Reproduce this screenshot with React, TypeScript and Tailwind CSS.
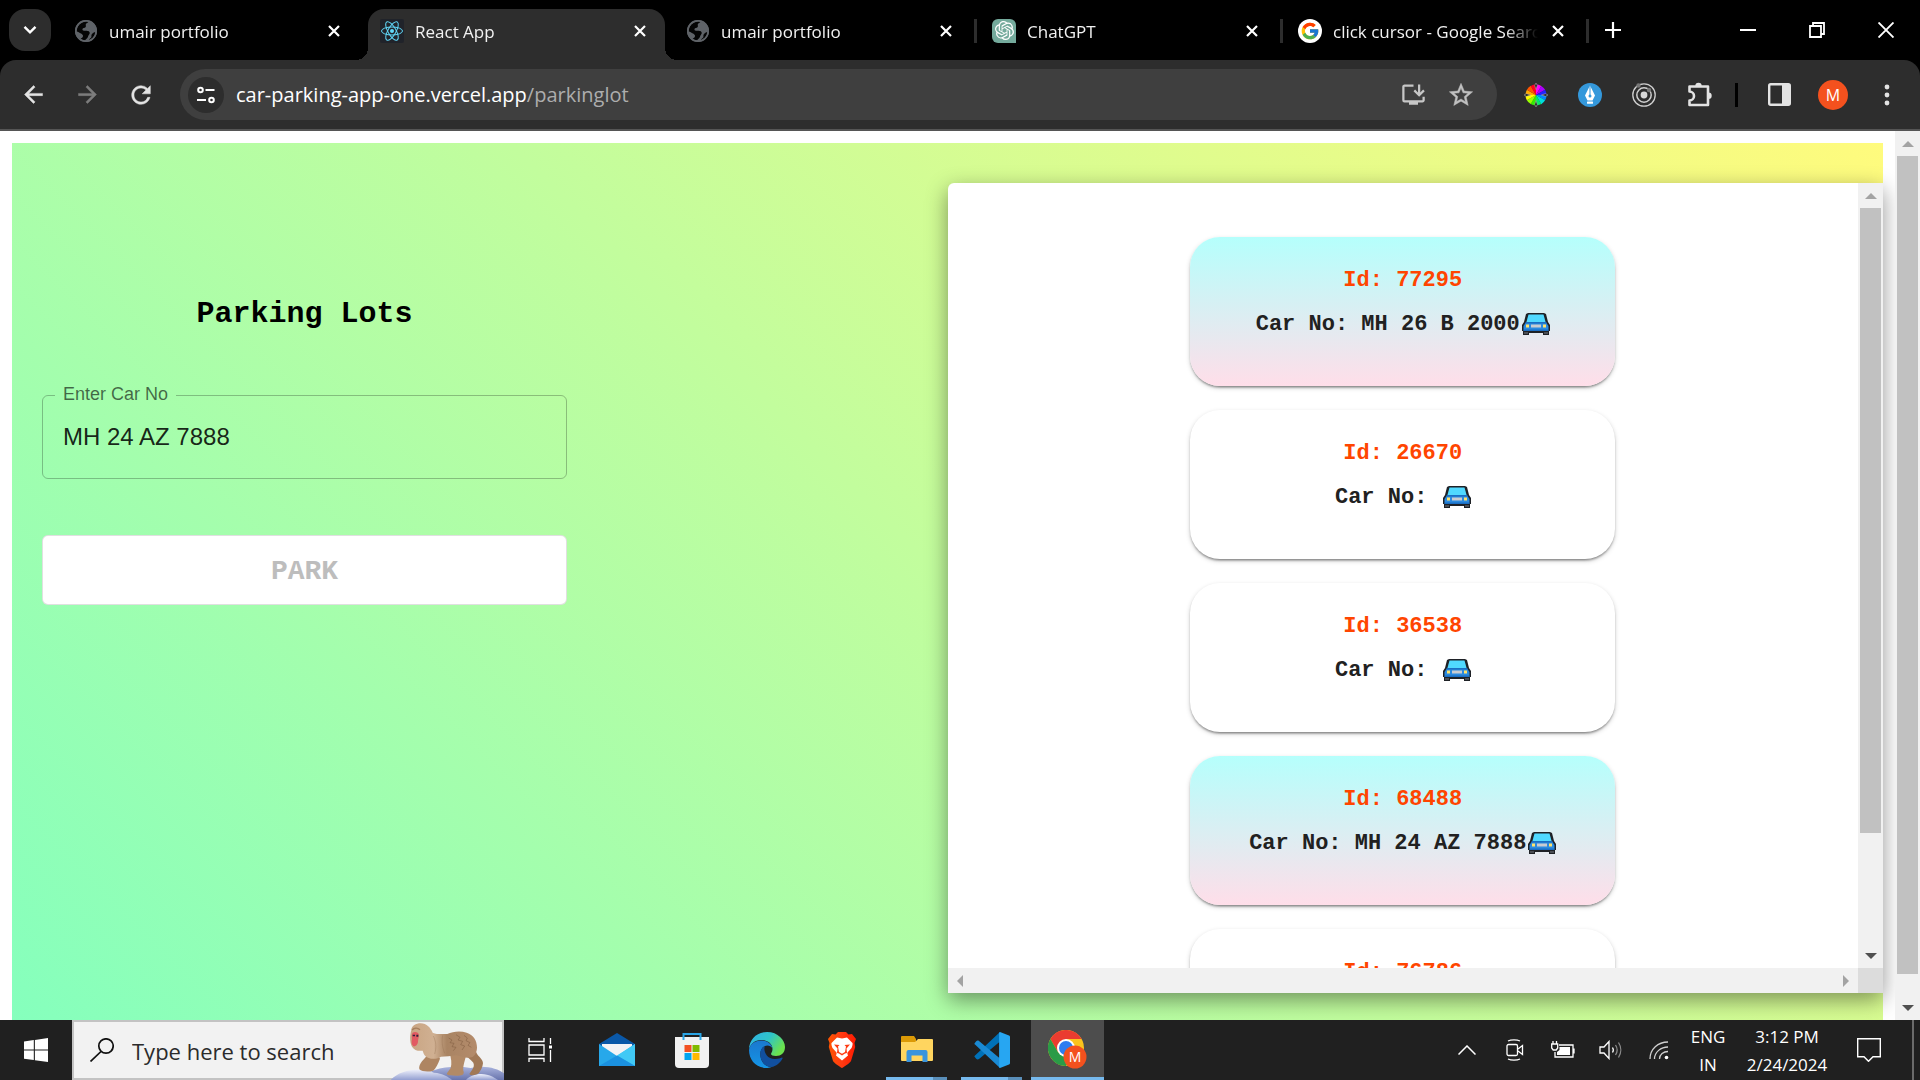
import React from "react";
import type { ReactNode } from "react";
import { FcGoogle } from "react-icons/fc";
import { SiOpenai } from "react-icons/si";
import { MdInstallDesktop } from "react-icons/md";

/* ---------- Favicons ---------- */

function GlobeIcon() {
  return (
    <svg viewBox="0 0 24 24" className="size-6" aria-hidden="true">
      <circle cx="12" cy="12" r="11" fill="#5f6368" />
      <path
        d="M9 3.2c2-.9 4-.9 5.500-.5-.6 1.200-2.300 1.300-2.700 2.600-.3 1.200.6 2-.3 3-.8.9-2.600.5-3 1.700-.3 1 .4 1.700 1.500 1.800 1.800.1 3.700-.3 5 .8 1.200 1.100.8 2.300-.2 3.300-.9.900-.6 2.100-1.500 3-.8.800-1.800 1.600-2.300 2.300-1.500-.1-3.200-.7-4.500-1.700 1.300-.3 2.300-1 2.500-2.200.2-1.300-.9-2-2-2.700-1.500-1-3-2-4.300-2.200C2.500 8.500 5 4.700 9 3.200Z"
        fill="#050505"
      />
      <path
        d="M21.400 13c-.3 3.700-2.800 7-6.400 8 .3-1.300 1.700-1.600 2.300-2.800.4-1-.2-2 .5-3 .8-1.200 2.200-1.800 3.600-2.200Z"
        fill="#050505"
      />
      <circle cx="12" cy="12" r="10.200" fill="none" stroke="#5f6368" strokeWidth="1.6" />
    </svg>
  );
}

function ReactIcon() {
  return (
    <svg viewBox="0 0 24 24" className="size-6" aria-hidden="true">
      <rect width="24" height="24" rx="2" fill="#20232a" />
      <g fill="none" stroke="#61dafb" strokeWidth="1">
        <ellipse cx="12" cy="12" rx="10.5" ry="4" />
        <ellipse cx="12" cy="12" rx="10.5" ry="4" transform="rotate(60 12 12)" />
        <ellipse cx="12" cy="12" rx="10.5" ry="4" transform="rotate(120 12 12)" />
      </g>
      <circle cx="12" cy="12" r="2" fill="#61dafb" />
    </svg>
  );
}

function ChatIcon() {
  return (
    <span className="flex size-6 items-center justify-center rounded-md rounded-br-none bg-[#74aa9c]">
      <SiOpenai className="size-[19px] text-white" />
    </span>
  );
}

function GoogleIcon() {
  return (
    <span className="flex size-6 items-center justify-center rounded-full bg-white">
      <FcGoogle className="size-5" />
    </span>
  );
}

/* ---------- Browser chrome ---------- */

function CrossIcon() {
  return (
    <svg viewBox="0 0 14 14" className="size-3.5" aria-hidden="true">
      <path d="M2 2l10 10M12 2 2 12" stroke="#fff" strokeWidth="2.2" fill="none" />
    </svg>
  );
}

type TabInfo = { title: string; icon: ReactNode; active?: boolean; divider?: boolean };

const tabs: TabInfo[] = [
  { title: "umair portfolio", icon: <GlobeIcon /> },
  { title: "React App", icon: <ReactIcon />, active: true },
  { title: "umair portfolio", icon: <GlobeIcon />, divider: true },
  { title: "ChatGPT", icon: <ChatIcon />, divider: true },
  { title: "click cursor - Google Search", icon: <GoogleIcon />, divider: true },
];

function Tab({ title, icon, active, divider }: TabInfo) {
  return (
    <div className="flex h-[51px] w-[306px] min-w-0">
      <div
        className={
          active
            ? "relative flex min-w-0 flex-1 rounded-t-2xl bg-[#2d2d2d] pr-[13px] pb-2 pl-3"
            : "relative flex min-w-0 flex-1 pr-[13px] pb-2 pl-3"
        }
      >
        {active && (
          <>
            <span className="absolute bottom-0 -left-3 size-3 bg-[radial-gradient(circle_at_0_0,#000_12px,#2d2d2d_12px)]" />
            <span className="absolute -right-3 bottom-0 size-3 bg-[radial-gradient(circle_at_100%_0,#000_12px,#2d2d2d_12px)]" />
          </>
        )}
        <button type="button" className="flex min-w-0 flex-1 items-center gap-[11px] text-left">
          <span className="shrink-0">{icon}</span>
          <span className="min-w-0 flex-1 overflow-hidden [mask-image:linear-gradient(to_right,#000_84%,transparent)] pt-0.5 text-[17px] leading-7 whitespace-nowrap text-[#f1f1f1]">
            {title}
          </span>
        </button>
        <button type="button" aria-label="Close tab" className="ml-2 flex w-6 items-center justify-center">
          <CrossIcon />
        </button>
      </div>
      <div className="flex w-[9px] items-center justify-center pb-2">
        {divider && <span className="h-6 w-[3px] bg-[#2d2d2d]" />}
      </div>
    </div>
  );
}

function TabStrip() {
  return (
    <div className="flex h-[60px] items-start bg-black pt-[9px] pl-[9px]">
      <button
        type="button"
        aria-label="Search tabs"
        className="mr-[11px] flex h-[42px] w-[42px] shrink-0 items-center justify-center rounded-2xl bg-[#2d2d2d]"
      >
        <svg viewBox="0 0 14 10" className="w-3.5" aria-hidden="true">
          <path d="M1.5 1.8 7 7.3l5.5-5.5" stroke="#fff" strokeWidth="2.4" fill="none" />
        </svg>
      </button>
      {tabs.map((tab, i) => (
        <Tab key={i} {...tab} />
      ))}
      <button type="button" aria-label="New tab" className="flex h-[42px] w-[42px] items-center justify-center">
        <svg viewBox="0 0 16 16" className="size-4" aria-hidden="true">
          <path d="M8 0v16M0 8h16" stroke="#fff" strokeWidth="2.2" />
        </svg>
      </button>
      <div className="-mt-[9px] ml-auto flex h-[60px]">
        <button type="button" aria-label="Minimize" className="flex w-[69px] items-center justify-center">
          <span className="h-0.5 w-4 bg-white" />
        </button>
        <button type="button" aria-label="Restore" className="flex w-[69px] items-center justify-center">
          <svg viewBox="0 0 16 16" className="size-4" fill="none" stroke="#fff" strokeWidth="1.8" aria-hidden="true">
            <path d="M1 4h11v11H1zM4 4V1h11v11h-3" />
          </svg>
        </button>
        <button type="button" aria-label="Close window" className="flex w-[69px] items-center justify-center">
          <svg viewBox="0 0 16 16" className="size-4" aria-hidden="true">
            <path d="M.5.5l15 15M15.5.5l-15 15" stroke="#fff" strokeWidth="1.9" />
          </svg>
        </button>
      </div>
    </div>
  );
}

function Glyph({ d, className }: { d: string; className: string }) {
  return (
    <svg viewBox="0 0 24 24" className={className} fill="currentColor" stroke="currentColor" strokeWidth="0.4" aria-hidden="true">
      <path d={d} />
    </svg>
  );
}

const backPath = "M20 11H7.83l5.59-5.59L12 4l-8 8 8 8 1.41-1.41L7.83 13H20v-2z";
const forwardPath = "M12 4l-1.41 1.41L16.17 11H4v2h12.17l-5.58 5.59L12 20l8-8z";
const reloadPath =
  "M17.65 6.35A7.958 7.958 0 0 0 12 4c-4.42 0-7.99 3.58-7.99 8s3.57 8 7.99 8c3.73 0 6.84-2.55 7.73-6h-2.08A5.99 5.99 0 0 1 12 18c-3.31 0-6-2.69-6-6s2.69-6 6-6c1.66 0 3.14.69 4.22 1.78L13 11h7V4l-2.35 2.35z";
const starPath =
  "M22 9.24l-7.19-.62L12 2 9.19 8.63 2 9.24l5.46 4.73L5.82 21 12 17.27 18.18 21l-1.63-7.03L22 9.24zM12 15.4l-3.76 2.27 1-4.28-3.32-2.88 4.38-.38L12 6.1l1.71 4.04 4.38.38-3.32 2.88 1 4.28L12 15.4z";

const wheel = ["#f0f", "#a0f", "#22f", "#08f", "#0dd", "#0e6", "#3e0", "#9f0", "#ff0", "#fa0", "#f50", "#f02"];

function ColorWheelIcon() {
  return (
    <svg viewBox="-12 -12 24 24" className="size-6" aria-hidden="true">
      {wheel.map((color, i) => (
        <path key={color} d="M0 0V-10.500A10.500 10.500 0 0 1 5.300-9.100Z" fill={color} transform={`rotate(${i * 30})`} />
      ))}
      <g fill="#222" stroke="#bbb" strokeWidth=".5">
        <path d="M0-12l1.300 2.500L0-5.500l-1.300-4Z" />
        <path d="M0-12l1.300 2.500L0-5.500l-1.300-4Z" transform="rotate(90)" />
        <path d="M0-12l1.300 2.500L0-5.500l-1.300-4Z" transform="rotate(180)" />
        <path d="M0-12l1.300 2.500L0-5.500l-1.300-4Z" transform="rotate(270)" />
      </g>
    </svg>
  );
}

function PenIcon() {
  return (
    <svg viewBox="0 0 24 24" className="size-6" aria-hidden="true">
      <circle cx="12" cy="12" r="12" fill="#3498db" />
      <path d="M12 2.5 7 12.500l2.500 5h5l2.500-5Z" fill="#fff" />
      <path d="M12 3v10" stroke="#3498db" strokeWidth="1" />
      <circle cx="12" cy="13" r="1.5" fill="#3498db" />
      <rect x="9" y="18.500" width="6" height="2.300" rx=".5" fill="#fff" />
    </svg>
  );
}

function RingsIcon() {
  return (
    <svg viewBox="0 0 24 24" className="size-6" fill="none" stroke="#cfcfcf" aria-hidden="true">
      <circle cx="12" cy="12" r="11.2" strokeWidth="1.3" />
      <circle cx="12" cy="12" r="7.2" strokeWidth="1.5" />
      <circle cx="12" cy="12" r="3.4" fill="#d8d8d8" stroke="none" />
      <circle cx="6.5" cy="2.500" r="2.2" fill="#777" stroke="none" />
      <circle cx="17" cy="7" r="2.2" fill="#777" stroke="none" />
    </svg>
  );
}

function PuzzleIcon() {
  return (
    <svg viewBox="0 0 26 26" className="ml-0.5 size-[26px]" aria-hidden="true">
      <path
        d="M3.500 4.500h18.500v18.500H3.500v-4.500a4 4 0 0 0 0-9Z"
        fill="none"
        stroke="#e3e3e3"
        strokeWidth="2.6"
        strokeLinejoin="round"
      />
      <path d="M9.300 4a3.200 3.200 0 0 1 6.400 0ZM22.500 10.500a3.200 3.200 0 0 1 0 6.400Z" fill="#e3e3e3" />
    </svg>
  );
}

function Toolbar() {
  return (
    <div className="bg-black">
      <div className="flex h-[71px] items-center rounded-t-2xl border-b-2 border-[#555] bg-[#2d2d2d] pr-1.5">
        <button type="button" aria-label="Back" className="flex w-[54px] justify-center pl-3">
          <Glyph d={backPath} className="size-[27px] text-[#e3e3e3]" />
        </button>
        <button type="button" aria-label="Forward" className="flex w-[54px] justify-center pl-3">
          <Glyph d={forwardPath} className="size-[27px] text-[#7c7c7c]" />
        </button>
        <button type="button" aria-label="Reload" className="mr-[18px] flex w-[54px] justify-center pl-3">
          <Glyph d={reloadPath} className="size-7 text-[#e3e3e3]" />
        </button>
        <div className="flex h-[51px] min-w-0 flex-1 items-center rounded-full bg-[#3f3f3f] pl-2">
          <button
            type="button"
            aria-label="Site information"
            className="flex size-9 shrink-0 items-center justify-center rounded-full bg-[#2d2d2d]"
          >
            <svg viewBox="0 0 18 18" className="size-[18px]" fill="none" stroke="#fff" strokeWidth="2" aria-hidden="true">
              <circle cx="3.5" cy="4" r="2.3" />
              <path d="M8.5 4H17.5M0 14h9" />
              <circle cx="14.5" cy="14" r="2.3" />
            </svg>
          </button>
          <div
            role="textbox"
            aria-label="Address"
            tabIndex={0}
            className="ml-3 min-w-0 flex-1 truncate text-xl leading-8 text-[#adadad]"
          >
            <span className="text-white">car-parking-app-one.vercel.app</span>/parkinglot
          </div>
          <button type="button" aria-label="Install app" className="flex w-12 justify-center">
            <MdInstallDesktop className="size-[27px] text-[#c7c7c7]" />
          </button>
          <button type="button" aria-label="Bookmark" className="mr-3 flex w-12 justify-center">
            <Glyph d={starPath} className="size-7 text-[#c0c0c0]" />
          </button>
        </div>
        <div className="flex items-center pl-3">
          <button type="button" aria-label="Color picker" className="flex w-[54px] justify-center">
            <ColorWheelIcon />
          </button>
          <button type="button" aria-label="Pen tool" className="flex w-[54px] justify-center">
            <PenIcon />
          </button>
          <button type="button" aria-label="Rings" className="flex w-[54px] justify-center">
            <RingsIcon />
          </button>
          <button type="button" aria-label="Extensions" className="flex w-[54px] justify-center">
            <PuzzleIcon />
          </button>
          <span className="mr-3.5 ml-2.5 h-6 w-[3px] bg-black" />
          <button type="button" aria-label="Side panel" className="flex w-[54px] justify-center">
            <svg viewBox="0 0 23 23" className="size-[23px]" aria-hidden="true">
              <rect x="1.2" y="1.2" width="20.6" height="20.6" rx="1.5" fill="none" stroke="#e3e3e3" strokeWidth="2.4" />
              <path d="M14 1h8v21h-8z" fill="#e3e3e3" />
            </svg>
          </button>
          <button type="button" aria-label="Profile" className="flex w-[54px] justify-center">
            <span className="flex size-[30px] items-center justify-center rounded-full bg-[#f4511e] text-base text-white">
              M
            </span>
          </button>
          <button type="button" aria-label="Menu" className="flex w-[54px] justify-center">
            <svg viewBox="0 0 6 22" className="h-[22px] w-1.5" fill="#e3e3e3" aria-hidden="true">
              <circle cx="3" cy="3" r="2.4" />
              <circle cx="3" cy="11" r="2.4" />
              <circle cx="3" cy="19" r="2.4" />
            </svg>
          </button>
        </div>
      </div>
    </div>
  );
}

/* ---------- Scroll bars ---------- */

function Arrow({ turn, color }: { turn: number; color: string }) {
  return (
    <span className="flex size-[25px] shrink-0 items-center justify-center">
      <svg viewBox="0 0 12 6" className="w-3" aria-hidden="true" style={{ rotate: `${turn}deg` }}>
        <path d="M6 0l6 6H0Z" fill={color} />
      </svg>
    </span>
  );
}

function VerticalScrollbar({ inner }: { inner?: boolean }) {
  return (
    <div className="flex w-[25px] shrink-0 flex-col bg-[#f1f1f1]" aria-hidden="true">
      <Arrow turn={0} color="#a3a3a3" />
      <div className="flex flex-1 flex-col px-0.5">
        <div className={inner ? "flex-[17_1_0] bg-[#c1c1c1]" : "flex-[39_1_0] bg-[#c1c1c1]"} />
        <div className={inner ? "flex-[3_1_0]" : "flex-[1_1_0]"} />
      </div>
      <Arrow turn={180} color="#505050" />
    </div>
  );
}

/* ---------- Parking page ---------- */

function CarIcon() {
  return (
    <svg viewBox="0 0 28 22" className="ml-0.5 inline-block h-[22px] w-7 align-[-5px]" role="img" aria-label="car">
      <path d="M6 0h16l2 1 2 8 2 3v6h-1v4h-6v-2H7v2H1v-4H0v-6l2-3 2-8Z" fill="#1e2126" />
      <path d="M6.500 1.500h15l2.500 9H4Z" fill="#50d9ff" />
      <path d="M3.500 10h21l2 3v5h-25v-5Z" fill="#2b8ae0" />
      <path d="M3.500 9h21v1.500h-21Z" fill="#1b6ec2" />
      <path d="M9 11.500h10v3H9Z" fill="#c9ccd1" />
      <path d="M4 11.500h3v3H4zM21 11.500h3v3h-3z" fill="#ffe36b" />
      <path d="M2 16.500h24v1.500H2Z" fill="#1b6ec2" />
      <path d="M2 19h4v2H2zM22 19h4v2h-4z" fill="#4a4d53" />
    </svg>
  );
}

type Lot = { id: string; carNo: string };

const lots: Lot[] = [
  { id: "77295", carNo: "MH 26 B 2000" },
  { id: "26670", carNo: "" },
  { id: "36538", carNo: "" },
  { id: "68488", carNo: "MH 24 AZ 7888" },
  { id: "76786", carNo: "" },
];

function LotCard({ id, carNo }: Lot) {
  return (
    <li
      className={`h-[149px] w-[425px] shrink-0 rounded-[30px] pt-[22px] text-center font-['Liberation_Mono',monospace] text-[22px] font-bold shadow-[0_3px_2px_-2px_rgba(0,0,0,0.25),0_2px_2px_rgba(0,0,0,0.18),0_2px_5px_rgba(0,0,0,0.18)] ${
        carNo ? "bg-[linear-gradient(0deg,#FFDEE9_0%,#B5FFFC_100%)]" : "bg-white"
      }`}
    >
      <p className="leading-[44px] text-[#ff4500]">Id: {id}</p>
      <p className="leading-[44px] whitespace-pre text-[#212121]">
        {`Car No: ${carNo}`}
        <CarIcon />
      </p>
    </li>
  );
}

function LotPanel() {
  return (
    <section
      aria-label="Parked cars"
      className="mt-10 mb-[27px] flex min-h-0 flex-col overflow-hidden rounded-tl-md bg-white shadow-[0_7px_22px_rgba(0,0,0,0.42)]"
    >
      <div className="flex min-h-0 flex-1">
        <ul className="flex min-w-0 flex-1 flex-col items-center gap-6 overflow-hidden pt-[54px]">
          {lots.map((lot) => (
            <LotCard key={lot.id} {...lot} />
          ))}
        </ul>
        <VerticalScrollbar inner />
      </div>
      <div className="flex shrink-0 bg-[#f1f1f1]" aria-hidden="true">
        <Arrow turn={270} color="#a3a3a3" />
        <span className="flex-1" />
        <Arrow turn={90} color="#a3a3a3" />
        <span className="size-[25px] bg-[#dcdcdc]" />
      </div>
    </section>
  );
}

function ParkingForm() {
  return (
    <form className="flex w-[585px] max-w-full flex-col px-[30px] pt-[153px]">
      <h1 className="text-center font-['Liberation_Mono',monospace] text-[30px] leading-9 font-bold text-black">
        Parking Lots
      </h1>
      <fieldset className="mt-[54px] h-[93px] rounded-md border border-black/25 px-3">
        <legend className="h-[18px] px-2 text-lg leading-4 text-black/60">
          <label htmlFor="car-no">Enter Car No</label>
        </legend>
        <input
          id="car-no"
          defaultValue="MH 24 AZ 7888"
          className="mt-[17px] w-full bg-transparent px-2 text-2xl text-black/87 outline-none"
        />
      </fieldset>
      <button
        type="button"
        disabled
        className="mt-14 h-[70px] rounded-md border border-black/12 bg-white pt-1 font-['Liberation_Mono',monospace] text-[28px] font-bold text-[#bdbdbd]"
      >
        PARK
      </button>
    </form>
  );
}

/* ---------- Taskbar ---------- */

function MonkeyArt() {
  return (
    <svg viewBox="0 12 360 180" className="absolute -right-0.5 -bottom-0.5 h-[60px] w-[120px]" aria-hidden="true">
      <defs>
        <linearGradient id="snow" x1="0" y1="0" x2="0" y2="1">
          <stop offset="0" stopColor="#a9b3dd" />
          <stop offset="1" stopColor="#6874ad" />
        </linearGradient>
        <linearGradient id="snowFront" x1="0" y1="0" x2="0" y2="1">
          <stop offset="0" stopColor="#eef0fb" />
          <stop offset="1" stopColor="#939fd1" />
        </linearGradient>
        <linearGradient id="fur" x1="0" y1="0" x2="1" y2="0">
          <stop offset="0" stopColor="#c9a583" />
          <stop offset=".35" stopColor="#d0b092" />
          <stop offset=".55" stopColor="#a98463" />
          <stop offset="1" stopColor="#b48b6b" />
        </linearGradient>
      </defs>
      <path d="M110 192c20-34 90-46 150-36 40-10 80 0 100 16v20Z" fill="url(#snow)" />
      <path d="M20 192c30-32 90-40 130-22 26 2 44 12 54 22Z" fill="url(#snowFront)" />
      <path d="M246 192c16-18 50-24 80-10l16 10Z" fill="url(#snowFront)" />
      <path
        d="M236 104c10 18 24 26 32 36 4 8 0 16-4 22l-8 12c4 6 20 4 28-2 6-8 12-18 13-30 0-12-14-20-19-30-2-8-8-16-12-20Z"
        fill="#a17957"
      />
      <path
        d="M130 112c-2 10-8 16-16 24-6 8-10 16-8 24 8 8 30 8 42 4 8-8 14-20 20-36l-10-20Z"
        fill="#ae8562"
      />
      <path
        d="M196 110c6 16 8 32 4 46l-10 14c-4 4 2 8 10 8 12 2 28 2 36-2 4-4 4-8 2-12-2-14 6-34 10-52Z"
        fill="#b28a67"
      />
      <path
        d="M82 42c0-12 14-20 28-20 18 0 30 14 36 28 14 6 28 4 44 4 16-8 40-10 58-4 20 6 31 24 31 44 0 14-6 26-16 30-16 4-32-2-46-6-16 2-32 4-46 4-18 10-36 8-47-2-4-4-6-10-8-16-14 2-26-2-32-12-8-14-6-36-2-50Z"
        fill="url(#fur)"
      />
      <path d="M148 60c8 16 10 34 4 54M176 58c-4 20 0 38 6 54" stroke="#8f6b4c" strokeWidth="3" fill="none" opacity=".3" />
      <path
        d="M194 66l10 6-6 8 12 2-6 10 12 2-8 10M216 56l12 8-6 8 14 4-6 10 12 4-8 12M240 58l10 8-4 8 12 6-6 8 10 6"
        stroke="#7d5a3e"
        strokeWidth="3"
        fill="none"
        opacity=".5"
      />
      <path d="M86 50c6-4 16-2 18 4 2 8-2 14-2 22 0 10-8 18-15 14-6-6-4-14-3-20 0-8-2-14 2-20Z" fill="#e25a62" />
      <path d="M86 56h7v5h-7zM97 56h6v6h-6z" fill="#30243c" />
      <path d="M84 42c6-6 16-8 24-1" stroke="#a67f5e" strokeWidth="4" fill="none" />
    </svg>
  );
}

function StartIcon() {
  return (
    <svg viewBox="0 0 24 24" className="size-6" fill="#fff" aria-hidden="true">
      <path d="M0 3.400 9.800 2.100v9.400H0ZM10.900 1.900 24 0v11.500H10.900ZM0 12.600h9.800V22L0 20.700ZM10.900 12.600H24V24l-13.100-1.800Z" />
    </svg>
  );
}

function TaskViewIcon() {
  return (
    <svg viewBox="0 0 24 24" className="mr-1 size-6" fill="none" stroke="#fff" strokeWidth="1.3" aria-hidden="true">
      <path d="M1 7h15v10H1zM1 0v3.500h15V0M1 24v-3.500h15V24M22.500 0v6M22.500 12v12" />
      <path d="M21 7.500h3v3h-3z" fill="#fff" stroke="none" />
    </svg>
  );
}

function MailIcon() {
  return (
    <svg viewBox="0 0 36 36" className="size-9" aria-hidden="true">
      <path d="M0 12 18 1l18 11v6H0Z" fill="#0a58a8" />
      <path d="M3 12h30v8L18 26 3 20Z" fill="#f3f3f5" />
      <path d="M0 12l18 12 18-12v22H0Z" fill="#27a8ea" />
      <path d="M18 23.500 36 12v22Z" fill="#41c9f5" />
      <path d="M0 34h36L18 23.500Z" fill="#1b91e0" />
    </svg>
  );
}

function StoreIcon() {
  return (
    <svg viewBox="0 0 36 36" className="size-9" aria-hidden="true">
      <path d="M9.500 8V2h17v6" fill="none" stroke="#2aa5e6" strokeWidth="2" />
      <path d="M1 5h34v27a4 4 0 0 1-4 4H5a4 4 0 0 1-4-4Z" fill="#f1f1f1" />
      <path d="M9.500 8V5M26.500 8V5" stroke="#2aa5e6" strokeWidth="2" />
      <path d="M10.500 13h7v7h-7z" fill="#f25022" />
      <path d="M18.500 13h7v7h-7z" fill="#7fba00" />
      <path d="M10.500 21h7v7h-7z" fill="#00a4ef" />
      <path d="M18.500 21h7v7h-7z" fill="#ffb900" />
    </svg>
  );
}

function EdgeIcon() {
  return (
    <svg viewBox="0 0 36 36" className="size-9" aria-hidden="true">
      <defs>
        <linearGradient id="edgeTop" x1="0" y1="0" x2="1" y2=".5">
          <stop offset="0" stopColor="#2fb0e8" />
          <stop offset=".55" stopColor="#2fc4c8" />
          <stop offset="1" stopColor="#6be24e" />
        </linearGradient>
        <linearGradient id="edgeLeft" x1="0" y1="0" x2="0" y2="1">
          <stop offset="0" stopColor="#1a78cf" />
          <stop offset="1" stopColor="#1595e6" />
        </linearGradient>
      </defs>
      <path d="M0 18C0 7 8 0 18 0c11 0 18 8 18 15 0 6-4 9-9 9-3 0-5-1-5-2 0-1 1.500-2 1.500-5C23.500 12 19 8 12 8 6 8 1 12 0 18Z" fill="url(#edgeTop)" />
      <path d="M0 18C1 12 6 8.500 12 8.500c6 0 11 3.500 11.500 8-1-2-3-3-5-3-5 0-8 5-7 11 1 6 5 10.500 11 10.500-2 .7-3.500 1-5 1C7 36 0 28 0 18Z" fill="url(#edgeLeft)" />
      <path d="M11.500 24.500c-1-5 1-9 4.500-10.500-2 3 .5 13 10 13 3.500 0 5.500-1 7-1.500.5 0 .8.500.5 1C31 31 27 34.500 22.500 35c-6 0-10-4.500-11-10.500Z" fill="#114f9e" />
    </svg>
  );
}

function BraveIcon() {
  return (
    <svg viewBox="0 0 30 36" className="h-9 w-[30px]" aria-hidden="true">
      <defs>
        <linearGradient id="brave" x1="0" y1="0" x2="1" y2="0">
          <stop offset="0" stopColor="#ff5500" />
          <stop offset=".5" stopColor="#ff3a12" />
          <stop offset="1" stopColor="#ff1a00" />
        </linearGradient>
      </defs>
      <path d="M8.500 2.500 11 0h8l2.500 2.500 3.500-.5 4 5-1.500 4 .7 4-4.200 14c-.6 2-8 6.500-9 7-1-.5-8.400-5-9-7L1.800 15l.7-4L1 7l4-5Z" fill="url(#brave)" />
      <path
        d="M15 6.500 10 5.500 4.500 11c-.5.800.5 4 1 5l4 4.500c.4.800-.2 2-.5 3l6 5 6-5c-.3-1-.9-2.200-.5-3l4-4.500c.5-1 1.500-4.200 1-5L20 5.500Z"
        fill="#fff"
      />
      <path
        d="M7 12.500l5.500.500-1.500 1.500 1 5.500 3 1.800 3-1.800 1-5.500-1.500-1.500 5.500-.500-3.500 4 .5 4.500-2 .500-3 2-3-2-2-.500.5-4.500Z"
        fill="#ff3a12"
      />
      <path d="M13.500 7h3l-.6 13h-1.800Z" fill="#fff" />
    </svg>
  );
}

function FolderIcon() {
  return (
    <svg viewBox="0 0 36 32" className="h-8 w-9" aria-hidden="true">
      <path d="M2 3a1 1 0 0 1 1-1h12l2 3v6H2Z" fill="#dc9a06" />
      <path d="M2 8h14l3-3h14a1 1 0 0 1 1 1v20a1 1 0 0 1-1 1H3a1 1 0 0 1-1-1Z" fill="#ffd55f" />
      <path d="M7.500 28V18a2 2 0 0 1 2-2h17a2 2 0 0 1 2 2v10h-5v-6.500h-11V28Z" fill="#3a94dc" />
    </svg>
  );
}

function CodeIcon() {
  return (
    <svg viewBox="0 0 36 36" className="size-9" aria-hidden="true">
      <path d="M1 23.500 26 0v9.500L5 27c-1 .6-2 .5-2.800-.3L.8 25c-.6-.5-.4-1 .2-1.500Z" fill="#0071b8" />
      <path d="M1 12.500 26 36v-9.500L5 9c-1-.6-2-.5-2.800.3L.8 11c-.6.5-.4 1 .2 1.500Z" fill="#1a8ad4" />
      <path d="M26 0l9 3.500c.6.300 1 .8 1 1.500v26c0 .7-.4 1.200-1 1.500L26 36c-.7-.3-.9-.6-.9-1.200V1.200C25.100.6 25.300.3 26 0Z" fill="#27a6f2" />
    </svg>
  );
}

function ChromeIcon() {
  return (
    <svg viewBox="0 0 40 40" className="size-10" aria-hidden="true">
      <circle cx="18" cy="18" r="18" fill="#fbc31c" />
      <path d="M2.400 9A18 18 0 0 1 33.600 9H18L10 22Z" fill="#ea3c30" />
      <path d="M2.400 9A18 18 0 0 0 18 36l8-13.500H10.200Z" fill="#2a9b47" />
      <circle cx="18" cy="18" r="9" fill="#fff" />
      <circle cx="18" cy="18" r="7" fill="#2f7cf0" />
      <circle cx="27" cy="27" r="11.500" fill="#f4511e" />
      <text x="27" y="32" textAnchor="middle" fontSize="14" fill="#fff" fontFamily="Open Sans, sans-serif">
        M
      </text>
    </svg>
  );
}

function AppButton({
  label,
  running,
  active,
  children,
}: {
  label: string;
  running?: boolean;
  active?: boolean;
  children: ReactNode;
}) {
  return (
    <button
      type="button"
      aria-label={label}
      className={
        active
          ? "ml-0.5 flex h-full w-[73px] flex-col items-center bg-[#4d4d4d]"
          : "flex h-full w-[75px] flex-col items-center"
      }
    >
      <span className="flex flex-1 items-center pt-[3px]">{children}</span>
      <span className={active ? "h-[3px] w-full bg-[#76b9ed]" : "flex h-[3px] w-[61px]"}>
        {running && (
          <>
            <span className="h-full flex-1 bg-[#76b9ed]" />
            <span className="h-full w-3.5 bg-[#5a8fba]" />
          </>
        )}
      </span>
    </button>
  );
}

function Taskbar() {
  return (
    <footer className="flex h-[60px] shrink-0 items-stretch bg-[#202020]">
      <button type="button" aria-label="Start" className="flex w-[72px] items-center justify-center">
        <StartIcon />
      </button>
      <div className="relative flex w-[432px] shrink-0 items-center border-2 border-[#c3c3c3] bg-[#f2f2f2] pl-4">
        <svg viewBox="0 0 24 24" className="size-6" fill="none" stroke="#111" strokeWidth="1.7" aria-hidden="true">
          <circle cx="16" cy="8" r="7.2" />
          <path d="M11 13.500.5 23.500" />
        </svg>
        <label htmlFor="taskbar-search" className="sr-only">
          Search
        </label>
        <input
          id="taskbar-search"
          placeholder="Type here to search"
          className="ml-[18px] w-64 bg-transparent pt-0.5 text-[22px] leading-8 outline-none placeholder:text-[#2b2b2b]"
        />
        <MonkeyArt />
      </div>
      <div className="flex items-stretch">
        <AppButton label="Task view">
          <TaskViewIcon />
        </AppButton>
        <AppButton label="Mail">
          <MailIcon />
        </AppButton>
        <AppButton label="Store">
          <StoreIcon />
        </AppButton>
        <AppButton label="Edge">
          <EdgeIcon />
        </AppButton>
        <AppButton label="Brave">
          <BraveIcon />
        </AppButton>
        <AppButton label="File Explorer" running>
          <FolderIcon />
        </AppButton>
        <AppButton label="Visual Studio Code" running>
          <CodeIcon />
        </AppButton>
        <AppButton label="Chrome" active>
          <ChromeIcon />
        </AppButton>
      </div>
      <div className="ml-auto flex items-center text-white">
        <button type="button" aria-label="Show hidden icons" className="flex w-12 justify-center">
          <svg viewBox="0 0 18 10" className="w-[18px]" fill="none" stroke="#fff" strokeWidth="1.5" aria-hidden="true">
            <path d="M.5 9.500 9 1l8.500 8.500" />
          </svg>
        </button>
        <button type="button" aria-label="Meet now" className="flex w-12 justify-center">
          <svg viewBox="0 0 18 22" className="h-[22px] w-[18px]" fill="none" stroke="#fff" strokeWidth="1.3" aria-hidden="true">
            <rect x="1" y="5.500" width="10.5" height="11" rx="1.5" />
            <path d="M12 10l4.500-3.500v9L12 12M2 2c3-1.500 9-1.500 12 0M2 20c3 1.500 9 1.500 12 0" />
          </svg>
        </button>
        <button type="button" aria-label="Battery" className="flex w-12 justify-center">
          <svg viewBox="0 0 24 18" className="h-[18px] w-6" fill="none" stroke="#fff" strokeWidth="1.3" aria-hidden="true">
            <path d="M8 4h14v12H4v-5M23 7.500v5" />
            <path d="M8.500 6H19v8H6v-3l2.500-2Z" fill="#fff" stroke="none" />
            <path d="M2 0v3M5.500 0v3M.7 3h6v4l-1.500 2h-3L.7 7Z" />
          </svg>
        </button>
        <button type="button" aria-label="Volume" className="flex w-12 justify-center">
          <svg viewBox="0 0 24 20" className="h-5 w-6" fill="none" stroke="#fff" strokeWidth="1.3" aria-hidden="true">
            <path d="M1 7h4l5-5.500v17L5 13H1Z" />
            <path d="M13.500 7.500c1 1.500 1 3.500 0 5" />
            <path d="M16.500 5c2 3 2 7 0 10M19.500 2.500c3 4.500 3 10.500 0 15" stroke="#8a8a8a" />
          </svg>
        </button>
        <button type="button" aria-label="Network" className="flex w-12 justify-center">
          <svg viewBox="0 0 20 20" className="size-5" fill="none" stroke="#fff" strokeWidth="1.3" aria-hidden="true">
            <path d="M1 19C1 9 9 2 19 2M5.500 19C5.500 12 12 7 19 7M10.500 19c0-4.500 4-7.500 8.500-7.500" stroke="#cfcfcf" />
            <circle cx="17.5" cy="17.500" r="1.8" fill="#fff" stroke="none" />
          </svg>
        </button>
        <button type="button" className="flex w-[50px] flex-col items-center pt-0.5 text-[17px] leading-7">
          <span>ENG</span>
          <span>IN</span>
        </button>
        <button type="button" className="flex w-[108px] flex-col items-center pt-0.5 text-[17px] leading-7">
          <span>3:12 PM</span>
          <span>2/24/2024</span>
        </button>
        <button type="button" aria-label="Notifications" className="mr-[29px] ml-3.5 flex w-[28px] justify-center">
          <svg viewBox="0 0 24 24" className="size-6" fill="none" stroke="#fff" strokeWidth="1.4" aria-hidden="true">
            <path d="M.7.7h22.600v18H16l-4.500 4.600L7 18.700H.7Z" />
          </svg>
        </button>
        <span className="mr-1.5 h-[60px] w-0.5 bg-[#6b6b6b]" />
      </div>
    </footer>
  );
}

export default function App() {
  return (
    <div className="flex h-screen flex-col overflow-hidden bg-white font-['Open_Sans','Noto_Sans',sans-serif]">
      <header className="shrink-0">
        <TabStrip />
        <Toolbar />
      </header>
      <main className="flex min-h-0 flex-1 overflow-hidden font-['Liberation_Sans',Arial,sans-serif]">
        <div className="flex min-w-0 flex-1 pt-3 pr-3 pl-3">
          <div className="grid min-w-0 flex-1 grid-cols-2 grid-rows-[minmax(0,1fr)] bg-[linear-gradient(45deg,#85FFBD_0%,#FFFB7D_100%)]">
            <div className="min-w-0 overflow-hidden">
              <ParkingForm />
            </div>
            <LotPanel />
          </div>
        </div>
        <div className="relative flex">
          <VerticalScrollbar />
        </div>
      </main>
      <Taskbar />
    </div>
  );
}
